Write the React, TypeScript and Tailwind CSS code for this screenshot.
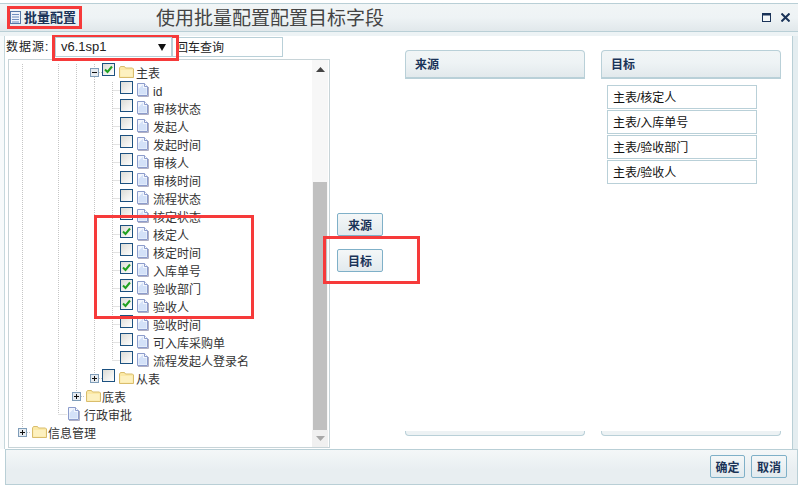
import React from "react";

type Cell = "" | "I" | "T" | "L" | "P" | "M";

function TreeCell({ kind }: { kind: Cell }) {
  const dots = { stroke: "#c6c6c6", strokeWidth: 1, strokeDasharray: "1 1" };
  return (
    <svg width="18" height="18" viewBox="0 0 18 18" className="shrink-0">
      {(kind === "I" || kind === "T") && <line x1="9.5" y1="0" x2="9.5" y2="18" {...dots} />}
      {kind === "L" && <line x1="9.5" y1="0" x2="9.5" y2="8" {...dots} />}
      {(kind === "T" || kind === "L") && <line x1="9.5" y1="8.5" x2="18" y2="8.5" {...dots} />}
      {(kind === "P" || kind === "M") && (
        <g>
          <line x1="9.5" y1="0" x2="9.5" y2="4" {...dots} />
          {kind === "M" && <line x1="9.5" y1="13" x2="9.5" y2="18" {...dots} />}
          <line x1="14" y1="8.5" x2="18" y2="8.5" {...dots} />
          <rect x="5.5" y="4.5" width="8" height="8" fill="#e6ebf0" stroke="#7f9db9" />
          <line x1="7" y1="8.5" x2="12" y2="8.5" stroke="#111" />
          {kind === "P" && <line x1="9.5" y1="6" x2="9.5" y2="11" stroke="#111" />}
        </g>
      )}
    </svg>
  );
}

function Check({ checked }: { checked?: boolean }) {
  return (
    <div className="w-[13px] h-[13px] shrink-0 mb-[7px] border border-[#1c5180] bg-gradient-to-br from-[#dcdcd6] to-[#ffffff] flex items-center justify-center">
      {checked && (
        <svg width="11" height="11" viewBox="0 0 11 11">
          <path d="M2 5.5 L4.5 8 L9 2.5" fill="none" stroke="#21a121" strokeWidth="2" />
        </svg>
      )}
    </div>
  );
}

function FileIcon() {
  return (
    <svg width="12" height="14" viewBox="0 0 12 14" className="shrink-0">
      <path d="M0.5 0.5 H7.5 L10.5 3.5 V12.5 H0.5 Z" fill="#f2f6fd" stroke="#8c9ccc" />
      <path d="M1.5 6 L6 1.5 V5 H9.5 V11.5 H1.5 Z" fill="#d3e1f8" />
      <path d="M7.5 0.5 V3.5 H10.5" fill="#fff" stroke="#8c9ccc" />
      <path d="M1 13.5 H11.5 V4" fill="none" stroke="#b0b0c4" />
    </svg>
  );
}

function FolderIcon() {
  return (
    <svg width="15" height="12" viewBox="0 0 15 12" className="shrink-0">
      <path d="M0.5 2 L1.5 0.5 H5.5 L6.5 2 H13.5 L14.5 3 V11.5 H0.5 Z" fill="#fbe9a6" stroke="#d9bd6c" />
      <path d="M1.5 4 H13.5 V10.5 H1.5 Z" fill="#fdf1c0" />
    </svg>
  );
}

type Row = { cells: Cell[]; text: string; box?: "on" | "off"; icon: "file" | "folder" };

const leaf = (text: string, last?: boolean, on?: boolean): Row => ({
  cells: ["I", "", "I", "I", "I", last ? "L" : "T"],
  text,
  box: on ? "on" : "off",
  icon: "file",
});

const rows: Row[] = [
  { cells: ["I", "", "I", "I", "M"], text: "主表", box: "on", icon: "folder" },
  leaf("id"),
  leaf("审核状态"),
  leaf("发起人"),
  leaf("发起时间"),
  leaf("审核人"),
  leaf("审核时间"),
  leaf("流程状态"),
  leaf("核定状态"),
  leaf("核定人", false, true),
  leaf("核定时间"),
  leaf("入库单号", false, true),
  leaf("验收部门", false, true),
  leaf("验收人", false, true),
  leaf("验收时间"),
  leaf("可入库采购单"),
  leaf("流程发起人登录名", true),
  { cells: ["I", "", "I", "I", "P"], text: "从表", box: "off", icon: "folder" },
  { cells: ["I", "", "I", "P"], text: "底表", icon: "folder" },
  { cells: ["I", "", "L"], text: "行政审批", icon: "file" },
  { cells: ["P"], text: "信息管理", icon: "folder" },
];

function TreeRow({ row }: { row: Row }) {
  const isFile = row.icon === "file";
  return (
    <div className="flex items-center h-[18px] whitespace-nowrap">
      {row.cells.map((c, i) => (
        <TreeCell key={i} kind={c} />
      ))}
      {row.box ? (
        <div className="-ml-[1px] mr-[4px]">
          <Check checked={row.box === "on"} />
        </div>
      ) : (
        <div className="w-[1px]" />
      )}
      <div className="mb-[2px]">{isFile ? <FileIcon /> : <FolderIcon />}</div>
      <span className={isFile ? "ml-[4px] pt-[2px]" : row.box ? "ml-[2px] pt-[2px]" : "ml-[1px] pt-[2px]"}>{row.text}</span>
    </div>
  );
}

function Scrollbar() {
  return (
    <div className="w-[16px] shrink-0 mr-[1px] flex flex-col bg-[#f7f7f7]">
      <div className="h-[16px] mt-[1px] flex items-center justify-center">
        <svg width="9" height="5" viewBox="0 0 9 5"><path d="M4.5 0 L9 5 H0 Z" fill="#444" /></svg>
      </div>
      <div className="h-[105px]" />
      <div className="flex-1 mx-[1px] bg-[#c0c0c0]" />
      <div className="h-[17px] flex items-center justify-center bg-[#f0f0f0]">
        <svg width="9" height="5" viewBox="0 0 9 5"><path d="M0 0 H9 L4.5 5 Z" fill="#a8a8a8" /></svg>
      </div>
    </div>
  );
}

function Btn({ children, className }: { children: React.ReactNode; className: string }) {
  return (
    <div className={`h-[23px] rounded-[2px] border border-[#7fb0c8] bg-gradient-to-b from-[#f4f7f8] to-[#e2eaee] flex items-center justify-center pt-[2px] font-bold text-[12px] text-[#1a3358] ${className}`}>
      {children}
    </div>
  );
}

function Column({ title, children }: { title: string; children?: React.ReactNode }) {
  return (
    <div className="w-[180px] flex flex-col">
      <div className="h-[29px] rounded-t-[4px] border border-b-2 border-[#b9d0d8] bg-[linear-gradient(#f1f5f6_0%,#eef3f5_45%,#e2e9ec_100%)] flex items-center pl-[9px] pt-[2px] font-bold text-[12px] text-[#1a3358]">
        {title}
      </div>
      <div className="flex-1 pl-[6px] pt-[6px] flex flex-col gap-[1px]">{children}</div>
      <div className="h-[5px] rounded-b-[4px] border border-t-0 border-[#b9d0d8] bg-[#edf2f4]" />
    </div>
  );
}

function Target({ children }: { children: React.ReactNode }) {
  return (
    <div className="w-[150px] h-[24px] border border-[#b9d0d8] flex items-center pl-[5px] pt-[2px] text-[12px] text-[#111]">
      {children}
    </div>
  );
}

function Mark({ className }: { className: string }) {
  return <div className={`absolute border-[3px] border-[#f63a3a] pointer-events-none ${className}`} />;
}

export default function App() {
  return (
    <div className="relative w-[798px] h-[486px] overflow-hidden bg-white flex flex-col pt-[3px] text-[12px] text-[#333] font-['Liberation_Sans','Noto_Sans_CJK_SC',sans-serif]">
      <div className="h-[29px] shrink-0 border-t border-b border-[#b9cfd6] bg-[linear-gradient(#f1f5f6_0%,#eef3f5_50%,#e1e8eb_100%)] flex items-center">
        <svg width="11" height="13" viewBox="0 0 11 13" className="ml-[10px] shrink-0">
          <rect x="0.5" y="0.5" width="10" height="12" fill="#eef3fb" stroke="#5577a8" />
          <path d="M2 3.5 H9 M2 6 H9 M2 8.5 H9 M2 11 H9" stroke="#6f8fc0" />
        </svg>
        <span className="ml-[3px] font-bold text-[13px] text-[#1a3358]">批量配置</span>
        <span className="ml-[80px] mt-[4px] text-[19px] text-[#444]">使用批量配置配置目标字段</span>
        <div className="ml-auto mr-[8px] flex items-center gap-[10px]">
          <svg width="9" height="9" viewBox="0 0 9 9">
            <rect x="0.5" y="0.5" width="8" height="8" fill="#f4f7f8" stroke="#1a3358" />
            <rect x="0" y="0" width="9" height="2.5" fill="#1a3358" />
          </svg>
          <svg width="9" height="9" viewBox="0 0 9 9">
            <path d="M0.5 0.5 L8.5 8.5 M8.5 0.5 L0.5 8.5" stroke="#1a3358" strokeWidth="2" />
          </svg>
        </div>
      </div>
      <div className="h-[4px] shrink-0 bg-[#edf3f5]" />
      <div className="flex-1 min-h-0 flex">
        <div className="w-[5px] shrink-0 border-r border-[#c6d8dd] bg-[#f7fafb]" />
        <div className="flex-1 flex bg-white min-w-0">
          <div className="w-[325px] shrink-0 flex flex-col">
            <div className="h-[23px] shrink-0 flex items-center pb-[1px]">
              <span className="ml-[1px] w-[49px] shrink-0 tracking-[1px] text-[#222]">数据源:</span>
              <div className="relative z-10 w-[117px] h-[20px] shrink-0 border border-[#b9d0d8] bg-white flex items-center pl-[5px] pr-[5px] text-[13px] text-[#222]">
                <span>v6.1sp1</span>
                <svg width="8" height="7" viewBox="0 0 8 7" className="ml-auto"><path d="M0 0 H8 L4 7 Z" fill="#111" /></svg>
              </div>
              <div className="w-[111px] h-[20px] shrink-0 border border-[#b9d0d8] bg-white flex items-center pl-[3px] pt-[1px] text-[#222]">
                回车查询
              </div>
            </div>
            <div className="ml-[3px] w-[322px] h-[389px] border border-[#c8d4d8] flex">
              <div className="flex-1 min-w-0 pl-[4px] pt-[4px] overflow-hidden">
                {rows.map((r, i) => (
                  <TreeRow key={i} row={r} />
                ))}
              </div>
              <Scrollbar />
            </div>
          </div>
          <div className="w-[75px] shrink-0 flex flex-col justify-center gap-[13px] pl-[7px]">
            <Btn className="w-[46px]">来源</Btn>
            <Btn className="w-[46px]">目标</Btn>
          </div>
          <div className="flex-1 flex gap-[16px] pt-[14px] pb-[13px]">
            <Column title="来源" />
            <Column title="目标">
              <Target>主表/核定人</Target>
              <Target>主表/入库单号</Target>
              <Target>主表/验收部门</Target>
              <Target>主表/验收人</Target>
            </Column>
          </div>
        </div>
        <div className="w-[6px] shrink-0 border-l border-[#b9cfd6] bg-[#e4edf0]" />
      </div>
      <div className="h-[36px] shrink-0 ml-[5px] border border-[#b9cfd6] bg-[linear-gradient(#f4f7f8_0%,#e8eef1_60%)] flex items-center justify-end gap-[6px] pr-[10px] pb-[1px]">
        <Btn className="w-[35px]">确定</Btn>
        <Btn className="w-[36px]">取消</Btn>
      </div>
      <div className="h-[1px] shrink-0" />
      <Mark className="left-[7px] top-[6px] w-[75px] h-[23px]" />
      <Mark className="left-[52px] top-[35px] w-[127px] h-[26px]" />
      <Mark className="left-[94px] top-[215px] w-[160px] h-[104px]" />
      <Mark className="left-[323px] top-[236px] w-[97px] h-[48px]" />
    </div>
  );
}
